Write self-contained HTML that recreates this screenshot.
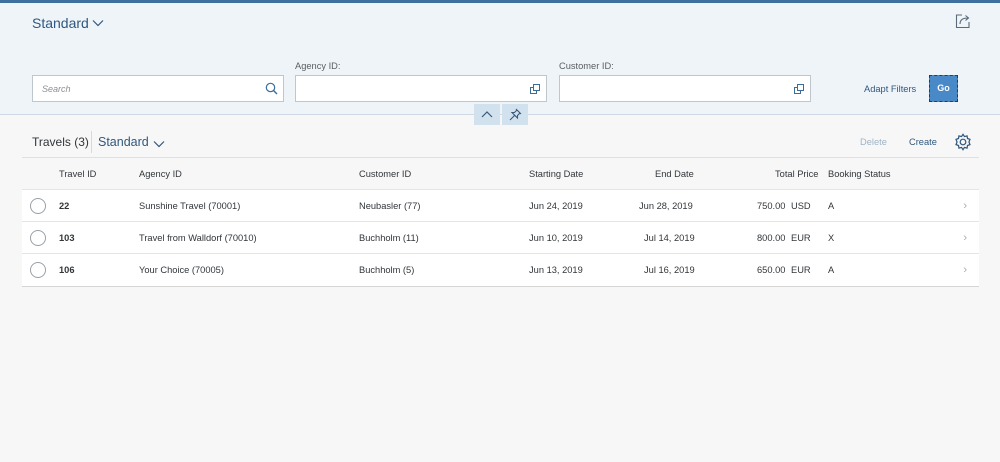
<!DOCTYPE html>
<html><head><style>
*{box-sizing:border-box;margin:0;padding:0}
body{width:1000px;height:462px;background:#f7f7f7;font-family:"Liberation Sans",Arial,sans-serif;position:relative;overflow:hidden;color:#32363a}
.abs{position:absolute}
.top{left:0;top:0;width:1000px;height:3px;background:#3f6f9f}
.hdr{left:0;top:3px;width:1000px;height:112px;background:#eff4f9;border-bottom:1px solid #cdd9e4}
.inp{height:27px;background:#fff;border:1px solid #bfc6cc}
.lbl{font-size:9.3px;color:#5a5e62}
.tbl{left:22px;top:125px;width:957px}
.row{position:absolute;left:0;width:957px;height:32px;background:#fff;border-bottom:1px solid #e5e5e5;font-size:9.3px;color:#32363a}
.row span,.th span{position:absolute;top:50%;transform:translateY(-50%);white-space:nowrap}
.th{position:absolute;left:0;top:32px;width:957px;height:33px;border-bottom:1px solid #e5e5e5;border-top:1px solid #e0e0e0;font-size:9.3px;color:#32363a}
.rad{width:16px;height:16px;border:1px solid #9aa0a6;border-radius:50%;left:8px}
.chev{right:12px;color:#aaa;font-size:11px}
</style></head><body>
<div class="abs top"></div>
<div class="abs hdr"></div>
<div class="abs" style="left:32px;top:15px;font-size:14px;color:#2f587e">Standard</div>
<svg class="abs" style="left:92px;top:19px" width="12" height="8"><path d="M1 1.5L6 6.5L11 1.5" fill="none" stroke="#2f587e" stroke-width="1.2"/></svg>
<svg class="abs" style="left:955px;top:13px" width="16" height="16"><path d="M7 2H1.5V14.5H14V9" fill="none" stroke="#5a6a7a" stroke-width="1.1"/><path d="M5 11C5 7 8 5 13 5M10.5 2.5L13.5 5L10.5 7.5" fill="none" stroke="#5a6a7a" stroke-width="1.1"/></svg>
<div class="abs lbl" style="left:295px;top:61px">Agency ID:</div>
<div class="abs lbl" style="left:559px;top:61px">Customer ID:</div>
<div class="abs inp" style="left:32px;top:75px;width:252px"><span class="abs" style="left:9px;top:8px;font-size:9px;font-style:italic;color:#8a8f94">Search</span>
<svg class="abs" style="left:232px;top:6px" width="13" height="13"><circle cx="5.5" cy="5.5" r="4.2" fill="none" stroke="#3a6d9a" stroke-width="1.2"/><path d="M8.5 8.5L12 12" stroke="#3a6d9a" stroke-width="1.4"/></svg></div>
<div class="abs inp" style="left:295px;top:75px;width:252px"><svg class="abs" style="left:234px;top:8px" width="11" height="11"><rect x="0.5" y="3.5" width="6" height="6" fill="none" stroke="#3a6d9a"/><rect x="3.5" y="0.5" width="6" height="6" fill="#fff" stroke="#3a6d9a"/></svg></div>
<div class="abs inp" style="left:559px;top:75px;width:252px"><svg class="abs" style="left:234px;top:8px" width="11" height="11"><rect x="0.5" y="3.5" width="6" height="6" fill="none" stroke="#3a6d9a"/><rect x="3.5" y="0.5" width="6" height="6" fill="#fff" stroke="#3a6d9a"/></svg></div>
<div class="abs" style="left:864px;top:84px;font-size:9.3px;color:#2f587e">Adapt Filters</div>
<div class="abs" style="left:929px;top:75px;width:29px;height:27px;background:#4a89c8;border:1px dashed #1e3f60;color:#fff;font-size:9px;font-weight:bold;text-align:center;line-height:25px">Go</div>
<div class="abs" style="left:474px;top:104px;width:26px;height:21px;background:#d1e1ee"><svg class="abs" style="left:7px;top:6px" width="12" height="8"><path d="M1 7L6 2L11 7" fill="none" stroke="#3a5a78" stroke-width="1.2"/></svg></div>
<div class="abs" style="left:502px;top:104px;width:26px;height:21px;background:#d1e1ee"><svg class="abs" style="left:7px;top:4px" width="13" height="13"><path d="M7 1L12 6M8 2L5.5 4.5L3 4.5L8.5 10L8.5 7.5L11 5M5.5 7.5L1 12" fill="none" stroke="#3a5a78" stroke-width="1.1"/></svg></div>
<div class="abs tbl">
<div class="abs" style="left:10px;top:10px;font-size:12px;color:#32363a">Travels (3)</div>
<div class="abs" style="left:69px;top:6px;width:1px;height:22px;background:#d9d9d9"></div>
<div class="abs" style="left:76px;top:10px;font-size:12.5px;color:#2f587e">Standard</div>
<svg class="abs" style="left:131px;top:15px" width="12" height="8"><path d="M1 1.5L6 6.5L11 1.5" fill="none" stroke="#2f587e" stroke-width="1.2"/></svg>
<div class="abs" style="left:838px;top:12px;font-size:9.3px;color:#9fb3c6">Delete</div>
<div class="abs" style="left:887px;top:12px;font-size:9.3px;color:#2f587e">Create</div>
<svg class="abs" style="left:932px;top:8px" width="18" height="18" viewBox="0 0 16 16"><circle cx="8" cy="8" r="2.5" fill="none" stroke="#2f587e" stroke-width="1.1"/><path d="M8 1.2L9.3 3.2L11.6 2.6L12 4.9L14.2 5.7L13.3 8L14.2 10.3L12 11.1L11.6 13.4L9.3 12.8L8 14.8L6.7 12.8L4.4 13.4L4 11.1L1.8 10.3L2.7 8L1.8 5.7L4 4.9L4.4 2.6L6.7 3.2Z" fill="none" stroke="#2f587e" stroke-width="1.1"/></svg>
<div class="th"><span style="left:37px">Travel ID</span><span style="left:117px">Agency ID</span><span style="left:337px">Customer ID</span><span style="left:507px">Starting Date</span><span style="left:633px">End Date</span><span style="left:753px">Total Price</span><span style="left:806px">Booking Status</span></div>
<div class="row" style="top:65px"><span class="rad"></span><span style="left:37px;font-weight:bold">22</span><span style="left:117px">Sunshine Travel (70001)</span><span style="left:337px">Neubasler (77)</span><span style="left:507px">Jun 24, 2019</span><span style="left:617px">Jun 28, 2019</span><span style="left:735px">750.00</span><span style="left:769px">USD</span><span style="left:806px">A</span><span class="chev">›</span></div>
<div class="row" style="top:97px"><span class="rad"></span><span style="left:37px;font-weight:bold">103</span><span style="left:117px">Travel from Walldorf (70010)</span><span style="left:337px">Buchholm (11)</span><span style="left:507px">Jun 10, 2019</span><span style="left:622px">Jul 14, 2019</span><span style="left:735px">800.00</span><span style="left:769px">EUR</span><span style="left:806px">X</span><span class="chev">›</span></div>
<div class="row" style="top:129px;height:33px;border-bottom:1px solid #d5d5d5"><span class="rad"></span><span style="left:37px;font-weight:bold">106</span><span style="left:117px">Your Choice (70005)</span><span style="left:337px">Buchholm (5)</span><span style="left:507px">Jun 13, 2019</span><span style="left:622px">Jul 16, 2019</span><span style="left:735px">650.00</span><span style="left:769px">EUR</span><span style="left:806px">A</span><span class="chev">›</span></div>
</div>
</body></html>
